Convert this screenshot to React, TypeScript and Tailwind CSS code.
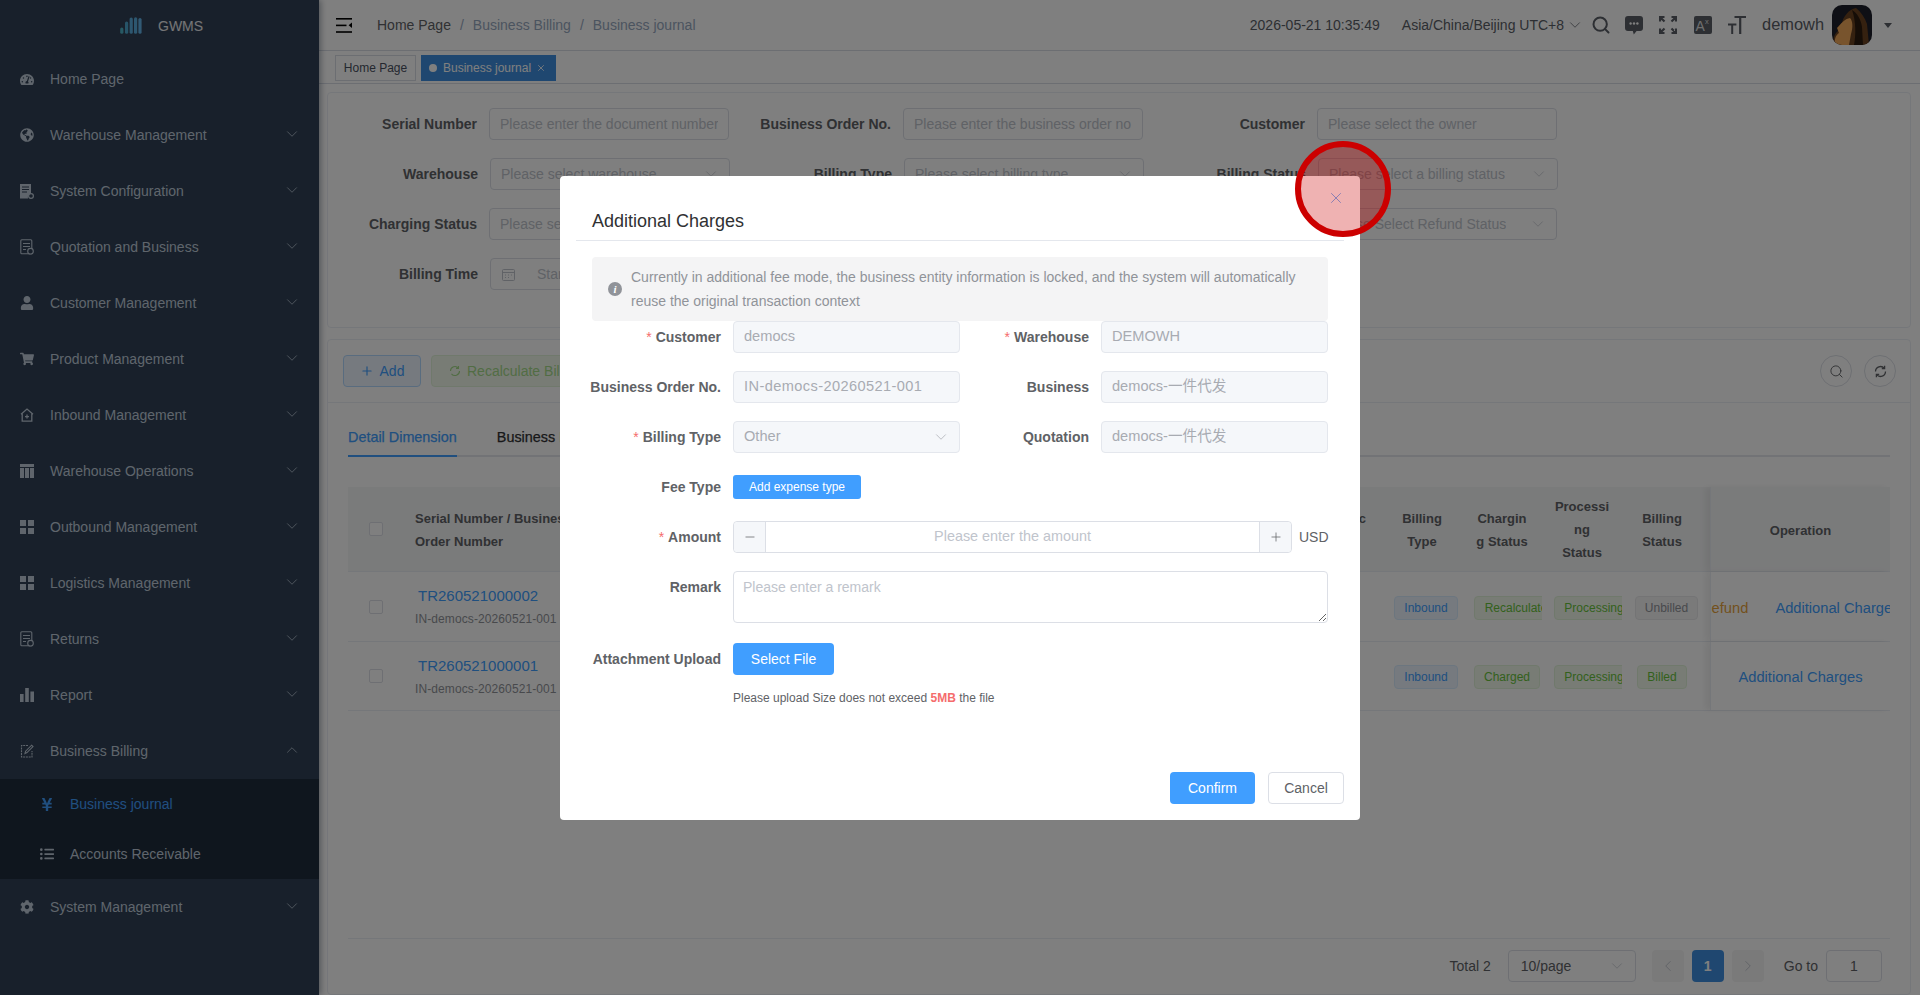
import { ChevronDown, ChevronLeft, ChevronRight, ChevronUp, Minus, Plus, Search, X } from "lucide-react"
import { FaCog, FaGlobeAmericas, FaListUl, FaShoppingCart, FaTachometerAlt, FaUser, FaYenSign } from "react-icons/fa"

const DocIcon = ({ badge = false }: { badge?: boolean }) => (
  <svg width="14" height="16" viewBox="0 0 14 16" fill="none" stroke="currentColor" strokeWidth="1.1">
    <rect x="0.8" y="0.8" width="11" height="14" rx="1" />
    <path d="M3 4.5h7M3 7.5h7M3 10.5h3" />
    {badge && <circle cx="10.5" cy="12.2" r="2.8" fill="#304156" />}
  </svg>
)

const FilledDocIcon = () => (
  <svg width="14" height="15" viewBox="0 0 14 15" fill="currentColor">
    <path d="M0 0h11v9.5a4 4 0 0 0-3 5H0z" />
    <path d="M2 3h7M2 5.5h7M2 8h5" stroke="#304156" strokeWidth="1" />
    <circle cx="11" cy="12" r="2.4" fill="none" stroke="currentColor" strokeWidth="1.2" />
  </svg>
)

const HouseIcon = () => (
  <svg width="14" height="14" viewBox="0 0 14 14" fill="none" stroke="currentColor" strokeWidth="1.3">
    <path d="M1 6.2 7 1l6 5.2M2.2 5.4v7.8h9.6V5.4M7 6.6v4M5 8.6h4" />
  </svg>
)

const TableIcon = () => (
  <svg width="14" height="14" viewBox="0 0 14 14" fill="currentColor">
    <rect width="14" height="3" />
    <rect y="4" width="4" height="10" />
    <rect x="5" y="4" width="4" height="10" />
    <rect x="10" y="4" width="4" height="10" />
  </svg>
)

const SquaresIcon = () => (
  <svg width="14" height="14" viewBox="0 0 14 14" fill="currentColor">
    <rect width="6" height="6" />
    <rect x="8" width="6" height="6" />
    <rect y="8" width="6" height="6" />
    <rect x="8" y="8" width="6" height="6" />
  </svg>
)

const BarsIcon = () => (
  <svg width="14" height="14" viewBox="0 0 14 14" fill="currentColor">
    <rect y="6" width="3.6" height="8" />
    <rect x="5.2" width="3.6" height="14" />
    <rect x="10.4" y="3.5" width="3.6" height="10.5" />
  </svg>
)

const EditIcon = () => (
  <svg width="14" height="14" viewBox="0 0 14 14" fill="none" stroke="currentColor" strokeWidth="1.1">
    <path d="M8 1.5H1.5v11.5h10.5V7" strokeDasharray="2 0.8" />
    <path d="M5 9.5 5.6 7.2 11.6 1.2l1.4 1.4-6 6z" />
  </svg>
)

const MenuFoldIcon = () => (
  <svg width="16" height="15" viewBox="0 0 16 15" fill="#000">
    <rect width="16" height="1.6" />
    <rect y="6.6" width="10.5" height="1.6" />
    <rect y="13.2" width="16" height="1.6" />
    <path d="M16 4.6v5.4l-3.4-2.7z" />
  </svg>
)

const CommentIcon = () => (
  <svg width="18" height="19" viewBox="0 0 18 19" fill="#5a5e66">
    <path d="M3 0h12a3 3 0 0 1 3 3v9a3 3 0 0 1-3 3h-3.4L8.8 18.5 7.8 15H3a3 3 0 0 1-3-3V3a3 3 0 0 1 3-3z" />
    <circle cx="5.6" cy="7.5" r="1.2" fill="#fff" />
    <circle cx="9" cy="7.5" r="1.2" fill="#fff" />
    <circle cx="12.4" cy="7.5" r="1.2" fill="#fff" />
  </svg>
)

const FullscreenIcon = () => (
  <svg width="18" height="18" viewBox="0 0 18 18" fill="none" stroke="#5a5e66" strokeWidth="2.2">
    <path d="M1 5.5V1h4.5M1 1l4.5 4.5M17 5.5V1h-4.5M17 1l-4.5 4.5M1 12.5V17h4.5M1 17l4.5-4.5M17 12.5V17h-4.5M17 17l-4.5-4.5" />
  </svg>
)

const TranslateIcon = () => (
  <svg width="18" height="18" viewBox="0 0 18 18">
    <rect width="18" height="18" rx="2" fill="#5a5e66" />
    <text x="1.5" y="15" fontSize="14" fontFamily="Liberation Sans" fill="#fff" fillOpacity="0.8">A</text>
    <text x="11" y="8" fontSize="7.5" fontFamily="Liberation Sans" fill="#fff" fillOpacity="0.8">x</text>
  </svg>
)

const FontSizeIcon = () => (
  <svg width="18" height="18" viewBox="0 0 18 18" fill="#5a5e66">
    <path d="M6.5 0H18v2h-4.7v16h-2.2V2H6.5z" />
    <path d="M0 7.5h8.4v1.9H5.2V18H3.2V9.4H0z" />
  </svg>
)

const Avatar = () => (
  <svg width="40" height="40" viewBox="0 0 40 40" className="rounded-[10px]">
    <rect width="40" height="40" fill="#1c1e2a" />
    <path d="M2 40c-2-6 1-12 4-14-2-3 1-6 4-8 1-6 7-14 14-15 5 4 9 10 11 16l2 21z" fill="#6b4220" />
    <path d="M7 21c3-4 6-7 11-8 3 3 3 10 1 16l-2 11H3c-1-6 1-10 4-12-1-2-1-4-2-5z" fill="#f0a85a" />
    <path d="M20 5c5 3 9 9 10 17l1 18h-9c2-10 2-24-2-35z" fill="#2b1a0e" />
  </svg>
)

const LogoIcon = () => (
  <svg width="22" height="17" viewBox="0 0 22 17" fill="none" strokeLinecap="round" strokeWidth="3.2">
    <path d="M1.8 15.2V12" stroke="#4fb3c8" />
    <path d="M6.6 15.2V6" stroke="#4fa8d0" />
    <path d="M11.2 15.2V2" stroke="#5aaee0" />
    <path d="M15.6 15.2V1.8" stroke="#5aaee0" />
    <path d="M20 15.2V2.5" stroke="#63b4ea" />
  </svg>
)

const menuItems = [
  { label: "Home Page", icon: <FaTachometerAlt size={15} />, noArrow: true },
  { label: "Warehouse Management", icon: <FaGlobeAmericas size={14} /> },
  { label: "System Configuration", icon: <FilledDocIcon /> },
  { label: "Quotation and Business", icon: <DocIcon badge /> },
  { label: "Customer Management", icon: <FaUser size={14} /> },
  { label: "Product Management", icon: <FaShoppingCart size={14} /> },
  { label: "Inbound Management", icon: <HouseIcon /> },
  { label: "Warehouse Operations", icon: <TableIcon /> },
  { label: "Outbound Management", icon: <SquaresIcon /> },
  { label: "Logistics Management", icon: <SquaresIcon /> },
  { label: "Returns", icon: <DocIcon badge /> },
  { label: "Report", icon: <BarsIcon /> },
]

function Arrow({ up, className = "" }: { up?: boolean; className?: string }) {
  return (
    <span className={`flex w-[14px] shrink-0 justify-center ${className}`}>
      <span className="-mx-2 flex">
        {up ? <ChevronUp size={18} strokeWidth={1} /> : <ChevronDown size={18} strokeWidth={1} />}
      </span>
    </span>
  )
}

function MenuRow({ label, icon, noArrow, open }: { label: string; icon: React.ReactNode; noArrow?: boolean; open?: boolean }) {
  return (
    <div className="flex h-14 shrink-0 items-center pl-5 pr-[20px] text-[#bfcbd9]">
      <span className="flex w-[14px] justify-center">{icon}</span>
      <span className="ml-4 text-sm">{label}</span>
      {!noArrow && <Arrow up={open} className="ml-auto -mt-[2px]" />}
    </div>
  )
}

function Sidebar() {
  return (
    <aside className="z-10 flex h-full w-[319px] shrink-0 flex-col bg-[#304156] shadow-[2px_0_6px_rgba(0,21,41,0.35)]">
      <div className="flex h-[51px] shrink-0 items-center gap-[17px] pl-[120px]">
        <LogoIcon />
        <span className="-ml-[1px] text-sm font-medium text-white/90">GWMS</span>
      </div>
      {menuItems.map((m) => (
        <MenuRow key={m.label} label={m.label} icon={m.icon} noArrow={m.noArrow} />
      ))}
      <MenuRow label="Business Billing" icon={<EditIcon />} open />
      <div className="bg-[#1f2d3d]">
        <div className="flex h-[50px] items-center pl-10 text-[#409eff]">
          <span className="flex w-[14px] justify-center"><FaYenSign size={15} /></span>
          <span className="ml-4 text-sm">Business journal</span>
        </div>
        <div className="flex h-[50px] items-center pl-10 text-[#bfcbd9]">
          <span className="flex w-[14px] justify-center"><FaListUl size={14} /></span>
          <span className="ml-4 text-sm">Accounts Receivable</span>
        </div>
      </div>
      <MenuRow label="System Management" icon={<FaCog size={14} />} />
    </aside>
  )
}

function Topbar() {
  return (
    <header className="flex h-[51px] shrink-0 items-center border-b border-[#d8dce5] pl-[17px] pr-[28px]">
      <MenuFoldIcon />
      <nav className="ml-[25px] flex items-center text-sm text-[#97a8be]">
        <span className="text-[#606266]">Home Page</span>
        <span className="mx-[9px]">/</span>
        <span>Business Billing</span>
        <span className="mx-[9px]">/</span>
        <span>Business journal</span>
      </nav>
      <div className="ml-auto flex items-center text-sm text-[#5a5e66]">
        <span>2026-05-21 10:35:49</span>
        <span className="ml-[22px]">Asia/China/Beijing UTC+8</span>
        <Arrow className="ml-1" />
        <Search size={20} strokeWidth={2.4} className="ml-[9px]" />
        <span className="ml-[14px] flex"><CommentIcon /></span>
        <span className="ml-4 flex"><FullscreenIcon /></span>
        <span className="ml-[17px] flex"><TranslateIcon /></span>
        <span className="ml-[16px] flex"><FontSizeIcon /></span>
        <span className="ml-[16px] text-[16.4px]">demowh</span>
        <span className="ml-2 flex"><Avatar /></span>
        <span className="ml-[12px] h-0 w-0 border-x-[4px] border-t-[5px] border-x-transparent border-t-[#5a5e66]" />
      </div>
    </header>
  )
}

function TagsBar() {
  return (
    <div className="flex h-[33px] shrink-0 items-start gap-[5px] border-b border-[#d8dce5] pl-4 pt-1 text-xs">
      <span className="flex h-[26px] w-[81px] items-center justify-center border border-[#d8dce5] text-[#495060]">Home Page</span>
      <span className="flex h-[26px] w-[135px] items-center bg-[#3f8fe0] pl-2 text-white">
        <span className="mr-[6px] h-2 w-2 rounded-full bg-white" />
        Business journal
        <X size={10} className="ml-[5px]" />
      </span>
    </div>
  )
}

function FilterItem({ label, tight, children }: { label: string; tight?: boolean; children: React.ReactNode }) {
  return (
    <div className="flex h-8 w-[414px] shrink-0 items-center">
      <label className={`shrink-0 text-right text-sm font-bold text-[#606266] ${tight ? "w-[149px]" : "w-[150px]"}`}>{label}</label>
      <div className="ml-3 w-[240px]">{children}</div>
    </div>
  )
}

const inputCls = "h-8 w-full rounded border border-[#dcdfe6] bg-white px-[10px] text-sm outline-none placeholder:text-[#c0c4cc]"

function FakeSelect({ placeholder }: { placeholder: string }) {
  return (
    <div className="flex h-8 w-full items-center rounded border border-[#dcdfe6] bg-white pl-[10px] pr-[11px] text-sm text-[#c0c4cc]">
      <span className="truncate">{placeholder}</span>
      <Arrow className="ml-auto" />
    </div>
  )
}

function FilterCard() {
  return (
    <section className="ml-2 mr-[9px] mt-2 h-[236px] shrink-0 rounded border border-[#ebeef5] pt-[15px]">
      <div className="flex flex-wrap gap-y-[18px]">
        <FilterItem tight label="Serial Number"><input className={inputCls} placeholder="Please enter the document number" readOnly /></FilterItem>
        <FilterItem tight label="Business Order No."><input className={inputCls} placeholder="Please enter the business order no" readOnly /></FilterItem>
        <FilterItem tight label="Customer"><input className={inputCls} placeholder="Please select the owner" readOnly /></FilterItem>
        <FilterItem label="Warehouse"><FakeSelect placeholder="Please select warehouse" /></FilterItem>
        <FilterItem label="Billing Type"><FakeSelect placeholder="Please select billing type" /></FilterItem>
        <FilterItem label="Billing Status"><FakeSelect placeholder="Please select a billing status" /></FilterItem>
        <FilterItem tight label="Charging Status"><FakeSelect placeholder="Please select" /></FilterItem>
        <FilterItem tight label="Processing Status"><FakeSelect placeholder="Please select" /></FilterItem>
        <FilterItem tight label="Refund Status"><FakeSelect placeholder="Please Select Refund Status" /></FilterItem>
        <FilterItem label="Billing Time">
          <div className="flex h-8 items-center rounded border border-[#dcdfe6] bg-white pl-[11px] text-sm text-[#c0c4cc]">
            <svg width="13" height="13" viewBox="0 0 13 13" fill="none" stroke="currentColor">
              <rect x="0.5" y="1.5" width="12" height="11" rx="1" />
              <path d="M0.5 4.5h12M3 7h1M6 7h1M9 7h1M3 9.5h1M6 9.5h1" />
            </svg>
            <span className="ml-[22px]">Start Time</span>
          </div>
        </FilterItem>
      </div>
    </section>
  )
}

const colsCls = "grid grid-cols-[67px_200px_1fr_80px_80px_80px_88px_180px]"

const tagColors = {
  blue: "border-[#d9ecff] bg-[#ecf5ff] text-[#409eff]",
  green: "border-[#e1f3d8] bg-[#f0f9eb] text-[#67c23a]",
  gray: "border-[#e9e9eb] bg-[#f4f4f5] text-[#909399]",
}

function Tag({ text, color, className }: { text: string; color: keyof typeof tagColors; className: string }) {
  return (
    <span className={`mt-[2px] flex h-6 shrink-0 items-center justify-center whitespace-nowrap rounded border text-xs ${tagColors[color]} ${className}`}>
      {text}
    </span>
  )
}

function CheckBox() {
  return <span className="ml-[21px] block h-[14px] w-[14px] rounded-[2px] border border-[#dcdfe6] bg-white" />
}

function HeadCell({ lines, className = "" }: { lines: string[]; className?: string }) {
  return (
    <div className={`flex flex-col items-center justify-center pt-[1px] text-[13px] font-bold leading-[23px] text-[#606266] ${className}`}>
      {lines.map((l) => <span key={l}>{l}</span>)}
    </div>
  )
}

function DataTable() {
  return (
    <div className="mt-[30px] h-[452px] border-b border-[#ebeef5]">
      <div className={`${colsCls} h-[85px] items-stretch border-b border-[#ebeef5] bg-[#f5f6f7]`}>
        <div className="flex items-center"><CheckBox /></div>
        <div className="flex flex-col justify-center whitespace-nowrap pt-[1px] text-[13px] font-bold leading-[23px] text-[#606266]">
          <span>Serial Number / Business</span>
          <span>Order Number</span>
        </div>
        <div className="flex flex-col items-end justify-center pr-4 pt-[1px] text-[13px] font-bold leading-[23px] text-[#606266]">
          <span>Basic</span>
          <span>&nbsp;</span>
        </div>
        <HeadCell lines={["Billing", "Type"]} />
        <HeadCell lines={["Chargin", "g Status"]} />
        <HeadCell lines={["Processi", "ng", "Status"]} />
        <HeadCell lines={["Billing", "Status"]} className="pr-2" />
        <div className="flex items-center justify-center border-l border-[#ebeef5] bg-[#f5f6f7] pt-[3px] text-[13px] font-bold text-[#606266] shadow-[-5px_0_6px_rgba(0,0,0,0.06)]">Operation</div>
      </div>

      <div className={`${colsCls} h-[70px] items-stretch border-b border-[#ebeef5]`}>
        <div className="flex items-center"><CheckBox /></div>
        <div className="flex flex-col justify-center">
          <span className="pl-[3px] text-[15px] leading-[24px] text-[#409eff]">TR260521000002</span>
          <span className="whitespace-nowrap text-xs leading-[22px] tracking-[0.1px] text-[#909399]">IN-democs-20260521-001</span>
        </div>
        <div />
        <div className="flex items-center overflow-hidden pl-3"><Tag text="Inbound" color="blue" className="w-16" /></div>
        <div className="flex items-center overflow-hidden pl-3"><Tag text="Recalculate" color="green" className="w-[84px]" /></div>
        <div className="flex items-center overflow-hidden pl-3"><Tag text="Processing" color="green" className="w-[80px]" /></div>
        <div className="flex items-center overflow-hidden pl-[13px]"><Tag text="Unbilled" color="gray" className="w-[63px]" /></div>
        <div className="flex items-center overflow-hidden border-l border-[#ebeef5] bg-white pt-1 text-[14.7px] shadow-[-5px_0_6px_rgba(0,0,0,0.06)]">
          <span className="-ml-[10px] shrink-0 text-[#e6a23c]">Refund</span>
          <span className="ml-[27px] shrink-0 text-[#409eff]">Additional Charges</span>
        </div>
      </div>

      <div className={`${colsCls} h-[69px] items-stretch border-b border-[#ebeef5]`}>
        <div className="flex items-center"><CheckBox /></div>
        <div className="flex flex-col justify-center pt-[1px]">
          <span className="pl-[3px] text-[15px] leading-[24px] text-[#409eff]">TR260521000001</span>
          <span className="whitespace-nowrap text-xs leading-[22px] tracking-[0.1px] text-[#909399]">IN-democs-20260521-001</span>
        </div>
        <div />
        <div className="flex items-center overflow-hidden pl-3"><Tag text="Inbound" color="blue" className="w-16" /></div>
        <div className="flex items-center overflow-hidden pl-3"><Tag text="Charged" color="green" className="w-[66px]" /></div>
        <div className="flex items-center overflow-hidden pl-3"><Tag text="Processing" color="green" className="w-[80px]" /></div>
        <div className="flex items-center overflow-hidden pl-[15px]"><Tag text="Billed" color="green" className="w-[50px]" /></div>
        <div className="flex items-center justify-center overflow-hidden border-l border-[#ebeef5] bg-white pt-[3px] text-[14.7px] text-[#409eff] shadow-[-5px_0_6px_rgba(0,0,0,0.06)]">
          Additional Charges
        </div>
      </div>
    </div>
  )
}

function Pagination() {
  return (
    <div className="mt-[11px] flex h-8 items-center justify-end pr-2 text-sm text-[#606266]">
      <span>Total 2</span>
      <div className="ml-[17px] flex h-8 w-32 items-center rounded border border-[#dcdfe6] pl-3 pr-[11px]">
        10/page
        <Arrow className="ml-auto text-[#c0c4cc]" />
      </div>
      <span className="ml-4 flex h-8 w-8 items-center justify-center rounded-sm bg-[#f4f4f5] text-[#c0c4cc]"><ChevronLeft size={18} strokeWidth={1.2} /></span>
      <span className="ml-2 flex h-8 w-8 items-center justify-center rounded-sm bg-[#3f8fe0] font-bold text-white">1</span>
      <span className="ml-2 flex h-8 w-8 items-center justify-center rounded-sm bg-[#f4f4f5] text-[#c0c4cc]"><ChevronRight size={18} strokeWidth={1.2} /></span>
      <span className="ml-5">Go to</span>
      <span className="ml-2 flex h-8 w-14 items-center justify-center rounded border border-[#dcdfe6]">1</span>
    </div>
  )
}

function ListCard() {
  return (
    <section className="ml-2 mr-[9px] mt-[11px] flex-1 rounded border border-[#ebeef5]">
      <div className="flex h-[63px] items-center border-b border-[#ebeef5] pl-[15px] pr-[14px]">
        <span className="flex h-8 w-[78px] items-center justify-center gap-[6px] rounded border border-[#b3d8ff] bg-[#ecf5ff] text-sm text-[#409eff]">
          <Plus size={14} /> Add
        </span>
        <span className="ml-[10px] flex h-8 w-[200px] items-center gap-[6px] overflow-hidden whitespace-nowrap rounded border border-[#e1f3d8] bg-[#f0f9eb] pl-[17px] text-sm text-[#a4da89]">
          <svg width="12" height="12" viewBox="0 0 12 12" fill="none" stroke="currentColor" strokeWidth="1.1"><path d="M1.5 6a4.5 4.5 0 0 1 8-2.8M10.5 6a4.5 4.5 0 0 1-8 2.8M9.5 1v2.4H7" /></svg>
          Recalculate Billing
        </span>
        <span className="ml-auto flex h-8 w-8 items-center justify-center rounded-full border border-[#dcdfe6] text-[#606266]"><Search size={15} strokeWidth={1.5} /></span>
        <span className="ml-3 flex h-8 w-8 items-center justify-center rounded-full border border-[#dcdfe6] text-[#606266]">
          <svg width="13" height="13" viewBox="0 0 13 13" fill="none" stroke="currentColor" strokeWidth="1.3"><path d="M1.5 6.5a5 5 0 0 1 8.8-3.2M11.5 6.5a5 5 0 0 1-8.8 3.2M10.6 0.8v2.8H7.8M2.4 12.2V9.4h2.8" /></svg>
        </span>
      </div>
      <div className="px-5">
        <div className="mt-5 flex h-[34px] gap-10 border-b-2 border-[#e4e7ed] text-[14.4px] [-webkit-text-stroke:0.25px]">
          <span className="h-[34px] border-b-2 border-[#409eff] pt-1 text-[#409eff]">Detail Dimension</span>
          <span className="pt-1 text-[#303133]">Business Dimension</span>
        </div>
        <DataTable />
        <Pagination />
      </div>
    </section>
  )
}

function ModalField({ label, required, children }: { label: string; required?: boolean; children: React.ReactNode }) {
  return (
    <div className="flex min-h-8 items-start">
      <label className="flex w-[129px] shrink-0 justify-end whitespace-nowrap text-sm font-bold leading-8 text-[#606266]">
        {required && <span className="mr-1 font-normal text-[#f56c6c]">*</span>}
        {label}
      </label>
      <div className="ml-3 min-w-0 flex-1">{children}</div>
    </div>
  )
}

function DisabledInput({ value, wide }: { value: string; wide?: boolean }) {
  return (
    <div className={`flex h-8 items-center rounded border border-[#e4e7ed] bg-[#f5f7fa] px-[10px] text-[14.6px] text-[#a8abb2] ${wide ? "tracking-[0.4px]" : ""}`}>{value}</div>
  )
}

function ChargesModal() {
  return (
    <div className="absolute left-[560px] top-[176px] flex h-[644px] w-[800px] flex-col rounded-sm bg-white">
      <div className="mx-4 flex h-[65px] shrink-0 items-end border-b border-[#e4e7ed] pb-[7px] pl-4 text-[18px] leading-[24px] text-[#303133]">
        Additional Charges
      </div>
      <X size={18} strokeWidth={1} className="absolute right-[15px] top-[13px] text-[#409eff]" />
      <div className="px-8 pt-4">
        <div className="flex h-16 items-center rounded bg-[#f4f4f5] pl-4 pr-4 text-sm leading-6 text-[#909399]">
          <span className="flex h-[14px] w-[14px] shrink-0 items-center justify-center rounded-full bg-[#909399] font-['Liberation_Serif',serif] text-[11px] font-bold italic leading-none text-white">i</span>
          <span className="ml-[9px]">Currently in additional fee mode, the business entity information is locked, and the system will automatically reuse the original transaction context</span>
        </div>
        <div className="grid grid-cols-2 gap-y-[18px]">
          <ModalField label="Customer" required><DisabledInput value="democs" /></ModalField>
          <ModalField label="Warehouse" required><DisabledInput value="DEMOWH" /></ModalField>
          <ModalField label="Business Order No."><DisabledInput wide value="IN-democs-20260521-001" /></ModalField>
          <ModalField label="Business"><DisabledInput value="democs-一件代发" /></ModalField>
          <ModalField label="Billing Type" required>
            <div className="flex h-8 items-center rounded border border-[#e4e7ed] bg-[#f5f7fa] pl-[10px] pr-[11px] text-[14.6px] text-[#a8abb2]">
              Other
              <Arrow className="ml-auto" />
            </div>
          </ModalField>
          <ModalField label="Quotation"><DisabledInput value="democs-一件代发" /></ModalField>
        </div>
        <div className="mt-[18px] flex flex-col gap-[18px]">
          <ModalField label="Fee Type">
            <div className="flex h-8 items-center">
              <span className="flex h-6 w-32 items-center justify-center rounded-[3px] bg-[#409eff] text-xs text-white">Add expense type</span>
            </div>
          </ModalField>
          <ModalField label="Amount" required>
            <div className="flex items-center">
              <div className="flex h-8 w-[559px] shrink-0 items-center rounded border border-[#dcdfe6] text-[14.4px] text-[#c0c4cc]">
                <span className="flex h-full w-8 items-center justify-center rounded-l border-r border-[#dcdfe6] bg-[#f5f7fa] text-[#606266]"><Minus size={14} strokeWidth={1.3} /></span>
                <span className="flex-1 text-center">Please enter the amount</span>
                <span className="flex h-full w-8 items-center justify-center rounded-r border-l border-[#dcdfe6] bg-[#f5f7fa] text-[#606266]"><Plus size={14} strokeWidth={1.3} /></span>
              </div>
              <span className="ml-[7px] whitespace-nowrap text-sm text-[#606266]">USD</span>
            </div>
          </ModalField>
          <ModalField label="Remark">
            <textarea
              readOnly
              placeholder="Please enter a remark"
              className="block h-[52px] w-full rounded border border-[#dcdfe6] px-[9px] py-[5px] text-sm outline-none placeholder:text-[#c0c4cc]"
            />
          </ModalField>
        </div>
        <div className="mt-5">
          <ModalField label="Attachment Upload">
            <span className="flex h-8 w-[101px] items-center justify-center rounded bg-[#409eff] text-sm text-white">Select File</span>
            <p className="mt-[14px] text-xs leading-[18px] text-[#606266]">
              Please upload Size does not exceed <b className="text-[#f56c6c]">5MB</b> the file
            </p>
          </ModalField>
        </div>
      </div>
      <div className="mt-auto flex justify-end gap-[13px] pb-4 pr-4 text-sm">
        <span className="flex h-8 w-[85px] items-center justify-center rounded bg-[#409eff] text-white">Confirm</span>
        <span className="flex h-8 w-[76px] items-center justify-center rounded border border-[#dcdfe6] text-[#606266]">Cancel</span>
      </div>
    </div>
  )
}

export default function App() {
  return (
    <div className="relative flex h-[995px] w-[1920px] overflow-hidden bg-white font-['Liberation_Sans','Noto_Sans_CJK_SC',sans-serif]">
      <Sidebar />
      <main className="flex min-w-0 flex-1 flex-col">
        <Topbar />
        <TagsBar />
        <FilterCard />
        <ListCard />
      </main>
      <div className="absolute inset-0 z-20 bg-black/50" />
      <div className="absolute inset-0 z-30">
        <ChargesModal />
        {/* click marker drawn over the close button */}
        <div className="absolute left-[1295px] top-[141px] h-[96px] w-[96px] rounded-full border-[6px] border-[#cc0000] bg-[#cc0000]/30" />
      </div>
    </div>
  )
}
